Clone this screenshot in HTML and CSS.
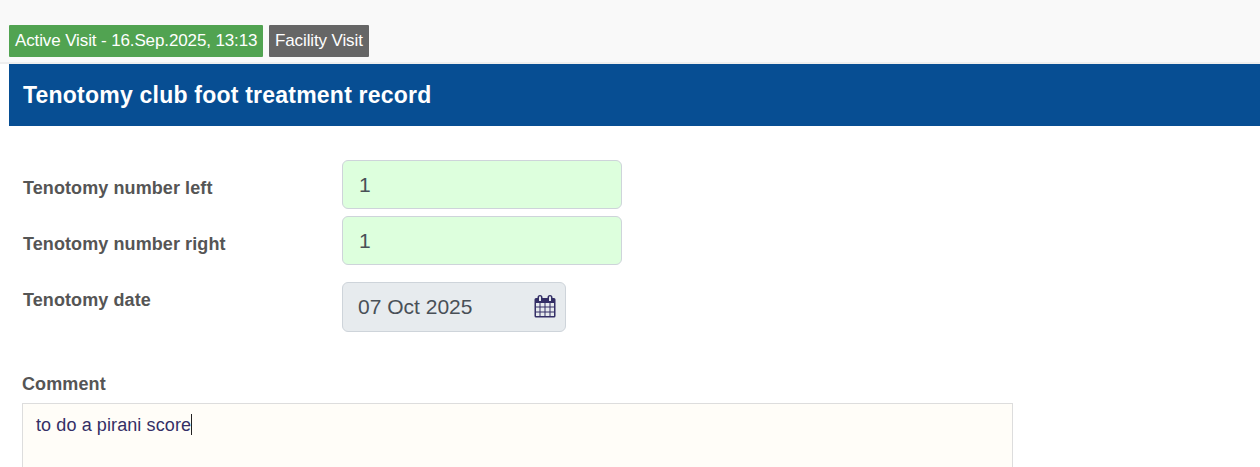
FILE: index.html
```html
<!DOCTYPE html>
<html lang="en">
<head>
<meta charset="utf-8">
<title>Tenotomy club foot treatment record</title>
<link rel="stylesheet" href="styles.css">
</head>
<body>
<header class="visit-bar">
  <span class="tag tag-active">Active Visit - 16.Sep.2025, 13:13</span>
  <span class="tag tag-facility">Facility Visit</span>
</header>
<main class="record">
  <h1 class="record-title">Tenotomy club foot treatment record</h1>
  <form class="form">
    <div class="row">
      <label class="label" for="left">Tenotomy number left</label>
      <input class="field" id="left" type="text" value="1">
    </div>
    <div class="row">
      <label class="label" for="right">Tenotomy number right</label>
      <input class="field" id="right" type="text" value="1">
    </div>
    <div class="row row-date">
      <span class="label">Tenotomy date</span>
      <div class="field field-date">
        <span class="date-text">07 Oct 2025</span>
        <svg class="calendar" viewBox="0 0 22 23" width="22" height="23">
          <path fill="#342f66" fill-rule="evenodd" d="M2 3H3.5V2.5Q3.5 0 6 0T8.5 2.5V3H13.5V2.5Q13.5 0 16 0T18.500 2.500V3H20Q21.500 3 21.500 4.500V21Q21.500 22.500 20 22.500H2Q.5 22.500 .5 21V4.500Q.5 3 2 3ZM5 2.500V6H7V2.500Q7 1.300 6 1.300T5 2.500ZM15 2.500V6H17V2.500Q17 1.300 16 1.300T15 2.500ZM2 8V11.500H5.500V8ZM6.500 8V11.500H10.500V8ZM11.500 8V11.500H15.500V8ZM16.500 8V11.500H20V8ZM2 12.500V16.500H5.500V12.500ZM6.500 12.500V16.500H10.500V12.500ZM11.500 12.500V16.500H15.500V12.500ZM16.500 12.500V16.500H20V12.500ZM2 17.500V21H5.500V17.500ZM6.500 17.500V21H10.500V17.500ZM11.500 17.500V21H15.500V17.500ZM16.500 17.500V21H20V17.500Z"/>
        </svg>
      </div>
    </div>
    <div class="comment">
      <span class="comment-label">Comment</span>
      <div class="comment-box"><span class="comment-text">to do a pirani score</span><span class="caret"></span></div>
    </div>
  </form>
</main>
</body>
</html>
```
FILE: styles.css
```css
* { box-sizing: border-box; }
body {
  display: flex;
  flex-direction: column;
  margin: 0;
  height: 467px;
  background: #fff;
  color: #555;
  font-family: "Liberation Sans", Arial, sans-serif;
}
.visit-bar {
  display: flex;
  flex: none;
  gap: 6px;
  height: 64px;
  padding: 25px 9px 0;
  background: #f9f9f9;
  border-bottom: 2px solid #eee;
}
.tag {
  height: 32px;
  padding: 0 6px;
  border-radius: 1px;
  color: #fff;
  font-size: 17px;
  line-height: 31px;
  letter-spacing: -0.12px;
  white-space: nowrap;
}
.tag-active { width: 254px; background: #51a351; }
.tag-facility { width: 100px; background: #666; }
.record { margin-left: 9px; }
.record-title {
  margin: 0;
  height: 62px;
  padding-left: 14px;
  background: #074e93;
  color: #fff;
  font-size: 23px;
  line-height: 62px;
  letter-spacing: 0.22px;
  white-space: nowrap;
}
.form { padding: 34px 0 0 13px; }
.row { display: flex; height: 56px; }
.label {
  width: 320px;
  padding: 18px 0 0 1px;
  font-size: 18px;
  font-weight: bold;
  line-height: 21px;
  letter-spacing: 0.09px;
}
.field {
  width: 280px;
  height: 49px;
  padding: 0 16px;
  background: #dfd;
  border: 1px solid #ced4da;
  border-radius: 6px;
  color: #495057;
  font-family: inherit;
  font-size: 21px;
}
.row-date { height: 102px; }
.field-date {
  display: flex;
  align-items: center;
  justify-content: space-between;
  width: 224px;
  height: 50px;
  margin-top: 10px;
  padding: 0 9px 0 15px;
  background: #e7ebee;
}
.calendar { margin-top: -1px; }
.comment-label {
  display: block;
  height: 29px;
  font-size: 18px;
  font-weight: bold;
  line-height: 21px;
  letter-spacing: 0.12px;
}
.comment-box {
  display: flex;
  width: 991px;
  height: 64px;
  padding: 10px 13px;
  background: #fffdf8;
  border: 1px solid #ddd;
  border-bottom: 0;
  color: #342f66;
  font-size: 18px;
  line-height: 23px;
  letter-spacing: 0.1px;
}
.caret { width: 1px; height: 21px; background: #222; }
```
